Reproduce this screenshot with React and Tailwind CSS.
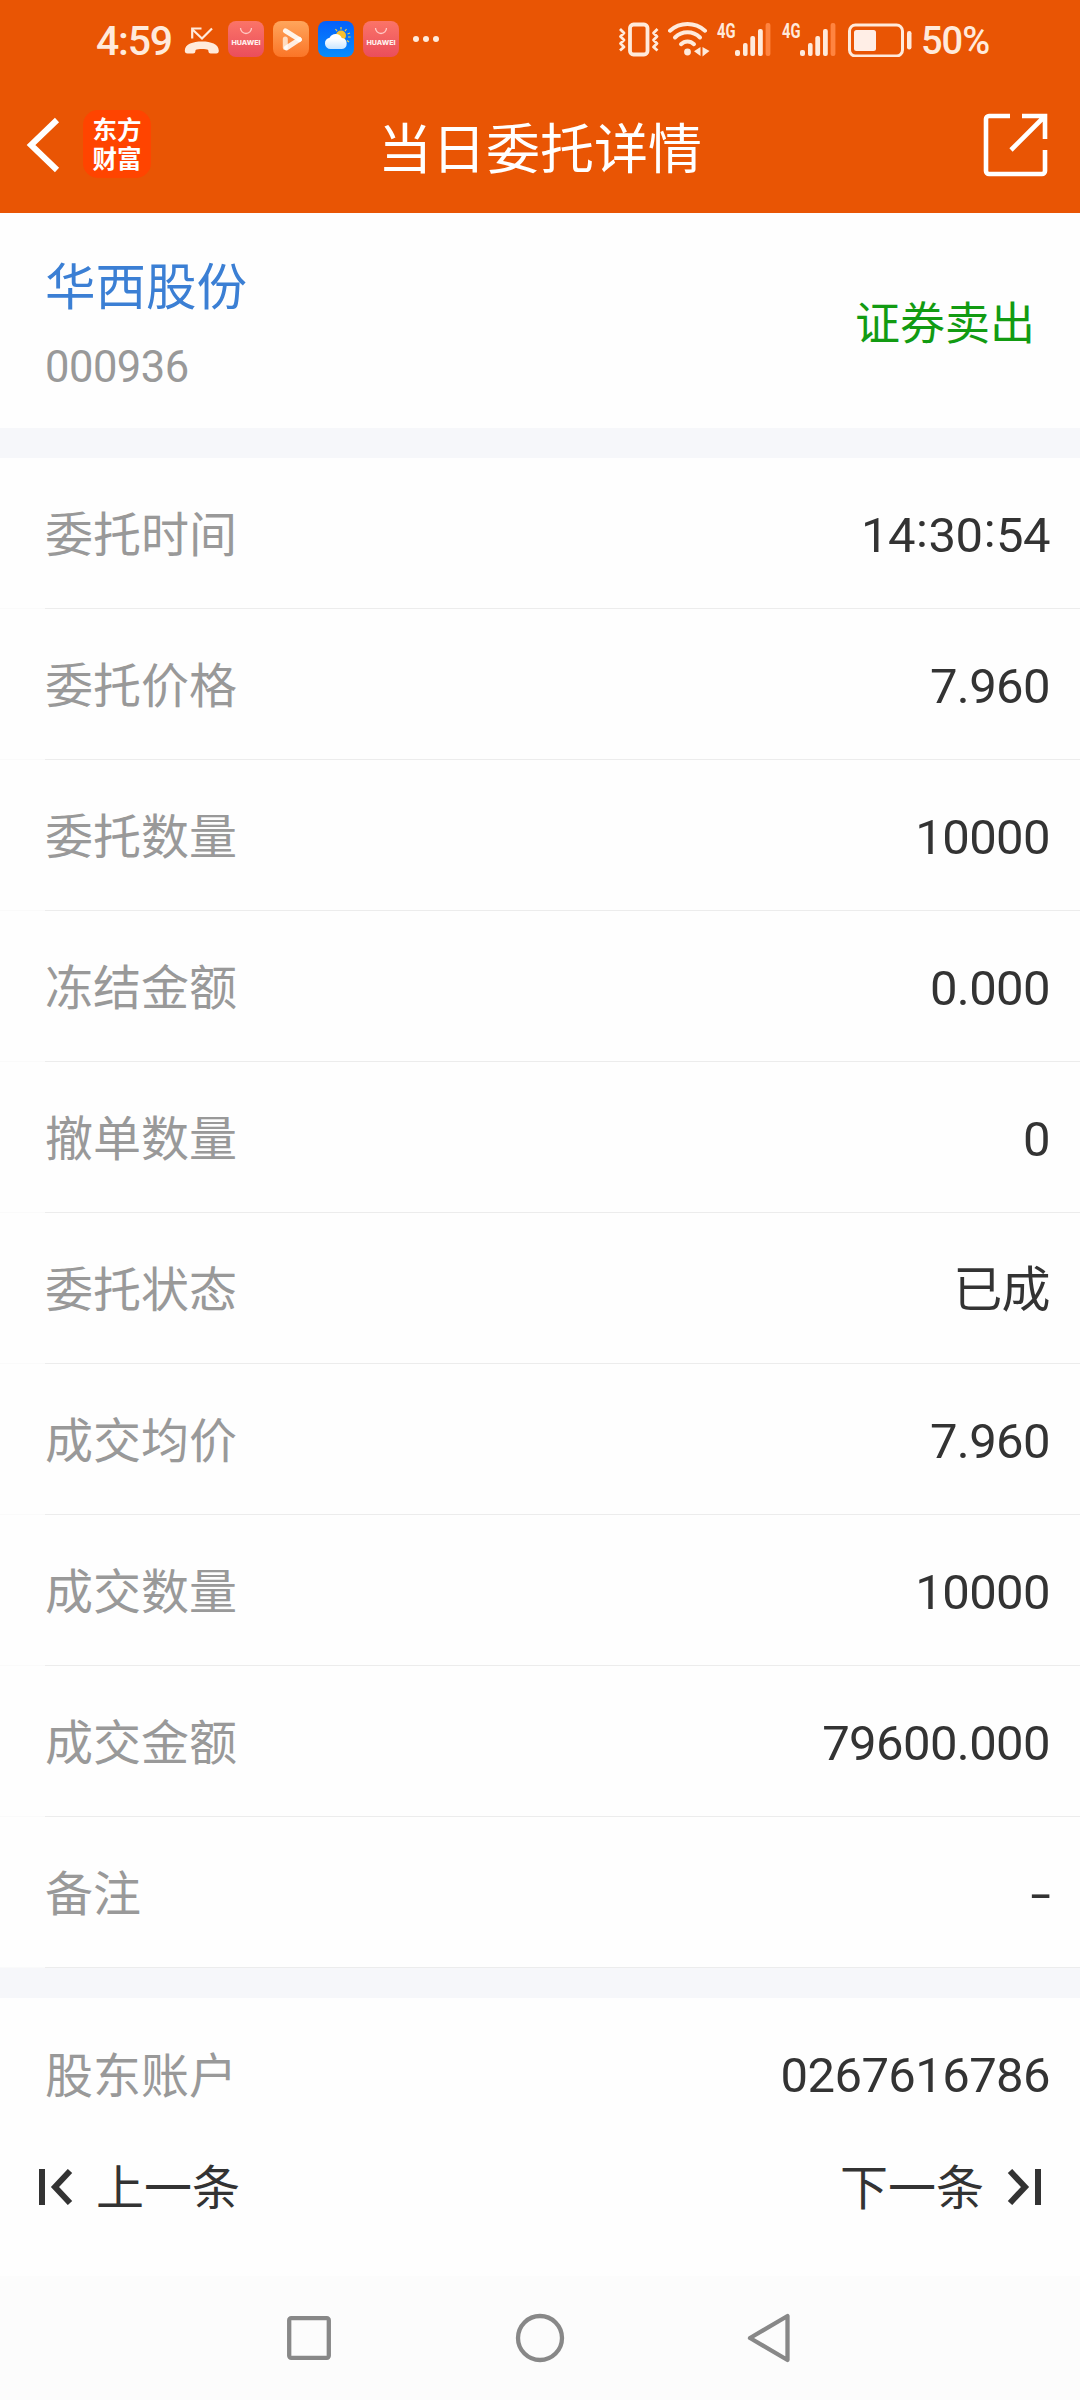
const rows = [
  ['委托时间', '14:30:54'],
  ['委托价格', '7.960'],
  ['委托数量', '10000'],
  ['冻结金额', '0.000'],
  ['撤单数量', '0'],
  ['委托状态', '已成'],
  ['成交均价', '7.960'],
  ['成交数量', '10000'],
  ['成交金额', '79600.000'],
  ['备注', '-'],
];

const CREAM = '#ffeadb';

function MissedCall() {
  return (
    <svg className="ml-3 h-9 w-9" viewBox="0 0 36 36" fill="none">
      <path d="M8.500 8.500l9.500 9L28 7.500" stroke={CREAM} strokeWidth="2.200" />
      <path d="M8.200 17.500V7.500H17.500" stroke={CREAM} strokeWidth="2.200" />
      <path d="M.8 29.500C1 23 9 20.500 18 20.500s16.500 2.500 16.800 9c.1 2-.8 3-2.600 3h-5.400c-1.800 0-2.400-1-2.600-3.500C22 27.600 14 27.600 11.600 29c-.2 2.500-.8 3.500-2.600 3.500H3.500C1.700 32.500.7 31.500.8 29.500z" fill={CREAM} />
    </svg>
  );
}

function HuaweiApp({ id }) {
  return (
    <svg className="h-9 w-9" viewBox="0 0 36 36" fill="none">
      <defs>
        <linearGradient id={id} x1="0" y1="0" x2="0" y2="1">
          <stop offset="0" stopColor="#fb7468" />
          <stop offset="1" stopColor="#ea4e5c" />
        </linearGradient>
      </defs>
      <rect width="36" height="36" rx="8" fill={`url(#${id})`} />
      <path d="M12.500 7a5.500 5.500 0 0 0 11 0" stroke="#ffc9c4" strokeWidth="1.300" />
      <text x="18" y="23.600" textAnchor="middle" textLength="29" lengthAdjust="spacingAndGlyphs" fill="#fff0ee" fontFamily="Inter, sans-serif" fontSize="6.500" fontWeight="800">HUAWEI</text>
    </svg>
  );
}

function VideoApp() {
  return (
    <svg className="h-9 w-9" viewBox="0 0 36 36" fill="none">
      <defs>
        <linearGradient id="video" x1="0" y1="0" x2="0" y2="1">
          <stop offset="0" stopColor="#ffa55c" />
          <stop offset="1" stopColor="#fb7527" />
        </linearGradient>
      </defs>
      <rect width="36" height="36" rx="8" fill="url(#video)" />
      <path d="M12.300 18v8.500" stroke="#ffdcc0" strokeWidth="5" strokeLinecap="round" />
      <path d="M12.500 9.800L26.300 18.500" stroke="#fff4ea" strokeWidth="5" strokeLinecap="round" />
      <path d="M26.300 18.500L13.500 26.800" stroke="#fff" strokeWidth="5" strokeLinecap="round" opacity=".85" />
    </svg>
  );
}

function WeatherApp() {
  return (
    <svg className="h-9 w-9" viewBox="0 0 36 36" fill="none">
      <defs>
        <linearGradient id="sky" x1="0" y1="0" x2="0" y2="1">
          <stop offset="0" stopColor="#0560fb" />
          <stop offset="1" stopColor="#078dfc" />
        </linearGradient>
        <linearGradient id="cloud" x1="0" y1="0" x2="0" y2="1">
          <stop offset="0.300" stopColor="#fff" />
          <stop offset="1" stopColor="#c9e6ff" />
        </linearGradient>
      </defs>
      <rect width="36" height="36" rx="8" fill="url(#sky)" />
      <g stroke="#f5cb3c" strokeWidth="1.200">
        <path d="M23 6v2.500M17.500 8l1.500 2.200M28.500 8l-1.500 2.200M32 12l-2.500 1M30 16h2.600M29 19.500l2 1.500" />
      </g>
      <circle cx="23" cy="14.500" r="5" fill="#fac02c" />
      <path d="M12.500 28a5.700 5.700 0 0 1-.9-11.300 6.800 6.800 0 0 1 12.200.4A5.500 5.500 0 0 1 24 28z" fill="url(#cloud)" />
    </svg>
  );
}

function Vibrate() {
  return (
    <svg className="h-9 w-[42px]" viewBox="0 0 42 36" fill="none" stroke={CREAM} strokeLinejoin="round">
      <rect x="12" y="3.500" width="17.500" height="30" rx="3.500" strokeWidth="3.800" />
      <path d="M2 8l4 4-3.500 3.500L6 19l-3.500 3.500L6 26l-4 3.500M39.500 8l-4 4 3.500 3.500-3.500 3.500 3.500 3.500L35.500 26l4 3.500" strokeWidth="2.800" />
    </svg>
  );
}

function Wifi() {
  return (
    <svg className="ml-2 h-9 w-[42px]" viewBox="0 0 42 36" fill="none" stroke={CREAM} strokeLinecap="round">
      <path d="M2 9.700C12 .8 27 .8 37 9.700" strokeWidth="4" />
      <path d="M7 16.500c7-7 18-7 25 0" strokeWidth="4" />
      <path d="M13 23.200c3.800-3.700 9.200-3.700 13 0" strokeWidth="4" />
      <circle cx="19.500" cy="31" r="3.400" fill={CREAM} stroke="none" />
      <path d="M32.500 26v9l-6.500-4.700zM34.500 35.500v-9.500L41.500 30z" fill={CREAM} stroke="none" />
    </svg>
  );
}

function Signal() {
  return (
    <svg className="h-12 w-[58px]" viewBox="-2 -6 58 48">
      <text x="0" y="16.500" textLength="18.500" lengthAdjust="spacingAndGlyphs" fill={CREAM} fontFamily="Roboto, sans-serif" fontSize="20" fontWeight="700">4G</text>
      <rect x="18" y="29" width="5" height="6" rx="2" fill={CREAM} />
      <rect x="26" y="22" width="4.600" height="13" rx="2" fill={CREAM} />
      <rect x="33.300" y="15" width="4.800" height="20" rx="2" fill={CREAM} />
      <rect x="41" y="8" width="4.800" height="27" rx="2" fill={CREAM} />
      <rect x="48.600" y="2" width="4.800" height="33" rx="2" fill="#ff8440" />
    </svg>
  );
}

function Battery() {
  return (
    <svg className="ml-[10px] h-9 w-[64px]" viewBox="0 0 64 36" fill="none">
      <rect x="1.500" y="4" width="53" height="31" rx="6" stroke={CREAM} strokeWidth="3" />
      <rect x="6" y="9" width="22" height="21" rx="2.500" fill="#ffeee6" />
      <rect x="59" y="10" width="4.500" height="18.500" rx="2.200" fill={CREAM} />
    </svg>
  );
}

function StatusBar() {
  return (
    <div className="flex h-[78px] items-center pr-[89px] pl-[96px] text-[#ffeadb]">
      <div className="mt-1 w-[76px] text-[41px] leading-none font-medium tracking-[-1.2px]">4:59</div>
      <MissedCall />
      <div className="ml-2 flex gap-[9px]">
        <HuaweiApp id="gallery-a" />
        <VideoApp />
        <WeatherApp />
        <HuaweiApp id="gallery-b" />
      </div>
      <div className="ml-[14px] flex gap-[4.5px]">
        <span className="size-[5.5px] rounded-full bg-[#ffeadb]" />
        <span className="size-[5.5px] rounded-full bg-[#ffeadb]" />
        <span className="size-[5.5px] rounded-full bg-[#ffeadb]" />
      </div>
      <div className="ml-auto flex items-center">
        <Vibrate />
        <Wifi />
        <div className="ml-[5px] flex gap-[7px]">
          <Signal />
          <Signal />
        </div>
        <Battery />
        <div className="mt-[3px] ml-[9px] w-[70px] text-[38px] leading-none font-medium tracking-[-1px] whitespace-nowrap">50%</div>
      </div>
    </div>
  );
}

function TitleBar() {
  return (
    <div className="grid h-[135px] grid-cols-3 items-center text-white">
      <div className="flex items-center pb-1 pl-[26px]">
        <svg className="mt-[3px] h-[56px] w-[34px]" viewBox="0 0 34 56" fill="none" stroke="#fff" strokeWidth="6">
          <path d="M31 3L5 28l26 25" />
        </svg>
        <div className="ml-[23px] flex size-[68px] flex-col items-center justify-center rounded-[15px] bg-[#ff4400] pt-0.5 text-[24.5px] leading-[29px] font-bold">
          <span>东方</span>
          <span>财富</span>
        </div>
      </div>
      <h1 className="pt-2.5 text-center text-[54px] leading-none whitespace-nowrap">当日委托详情</h1>
      <svg className="mr-[32px] mb-px size-[66px] justify-self-end" viewBox="0 0 66 66" fill="none" stroke="#fff" strokeWidth="4.600">
        <path d="M28 4H7a3 3 0 0 0-3 3v52a3 3 0 0 0 3 3h53a3 3 0 0 0 3-3V38" />
        <path d="M40 4h23v23M62 5L29 38" />
      </svg>
    </div>
  );
}

function Value({ text }) {
  if (text === '-') {
    return <span className="inline-block origin-right scale-x-150">-</span>;
  }
  return text.split(/(:)/).map((part, i) =>
    part === ':' ? (
      <span key={i} className="inline-block -translate-y-[5px] px-[1.2px]">:</span>
    ) : (
      <span key={i}>{part}</span>
    )
  );
}

function Row({ label, value, line = true }) {
  return (
    <div className="flex h-[151px] flex-col">
      <div className="flex flex-1 items-center justify-between pr-[30px] pl-[45px]">
        <span className="pt-1.5 text-[48px] leading-none text-[#999999]">{label}</span>
        <span className="pt-1 text-[49px] leading-none tracking-[-0.6px] text-[#333333]">
          <Value text={value} />
        </span>
      </div>
      {line && (
        <div className="h-px bg-[#fafafa] pl-[45px]">
          <div className="h-px bg-[#ececec]" />
        </div>
      )}
    </div>
  );
}

export default function App() {
  return (
    <div className="flex h-[2400px] w-[1080px] flex-col overflow-hidden bg-[#fefefe] font-[Roboto,'Noto_Sans_CJK_SC',sans-serif]">
      <header className="h-[213px] bg-[#e95504]">
        <StatusBar />
        <TitleBar />
      </header>

      <section className="flex h-[215px] items-center justify-between pr-[45px] pl-[45px]">
        <div className="flex flex-col pt-[12px]">
          <span className="text-[50.5px] leading-[60px] text-[#3b7fd4]">华西股份</span>
          <span className="mt-[22px] text-[43.5px] leading-[56px] tracking-[-0.5px] text-[#999999]">000936</span>
        </div>
        <span className="pt-[7px] text-[45px] leading-none text-[#129b12]">证券卖出</span>
      </section>

      <div className="h-[30px] bg-[#f6f7fa]" />
      <section>
        {rows.map(([label, value]) => (
          <Row key={label} label={label} value={value} />
        ))}
      </section>
      <div className="h-[30px] bg-[#f6f7fa]" />

      <Row label="股东账户" value="0267616786" line={false} />

      <div className="flex h-[127px] items-start justify-between pt-[10px] pr-[38px] pl-[38px] text-[48px] leading-[50px] text-[#333333]">
        <button className="flex items-center">
          <svg className="h-9 w-[36px]" viewBox="0 0 36 36" fill="none" stroke="#333">
            <path d="M4 0v36M32 2L17 18l15 16" strokeWidth="6" />
          </svg>
          <span className="ml-[22px] pt-[5px]">上一条</span>
        </button>
        <button className="flex items-center">
          <span className="pt-[5px]">下一条</span>
          <svg className="ml-[22px] h-9 w-[36px]" viewBox="0 0 36 36" fill="none" stroke="#333">
            <path d="M32 0v36M4 2l15 16L4 34" strokeWidth="6" />
          </svg>
        </button>
      </div>

      <nav className="flex h-[124px] items-center bg-[#fcfcfc] pl-[285px]">
        <svg className="size-12" viewBox="0 0 48 48" fill="none" stroke="#888888" strokeWidth="4.300">
          <rect x="4.200" y="4.200" width="39.600" height="39.600" rx="2" />
        </svg>
        <svg className="ml-[182px] size-[50px]" viewBox="0 0 50 50" fill="none" stroke="#888888" strokeWidth="4.300">
          <circle cx="25" cy="25" r="22" />
        </svg>
        <svg className="ml-[181px] size-[50px]" viewBox="0 0 50 50" fill="none" stroke="#888888" strokeWidth="4.300" strokeLinejoin="round">
          <path d="M41.500 3v44L4 25z" />
        </svg>
      </nav>
    </div>
  );
}
